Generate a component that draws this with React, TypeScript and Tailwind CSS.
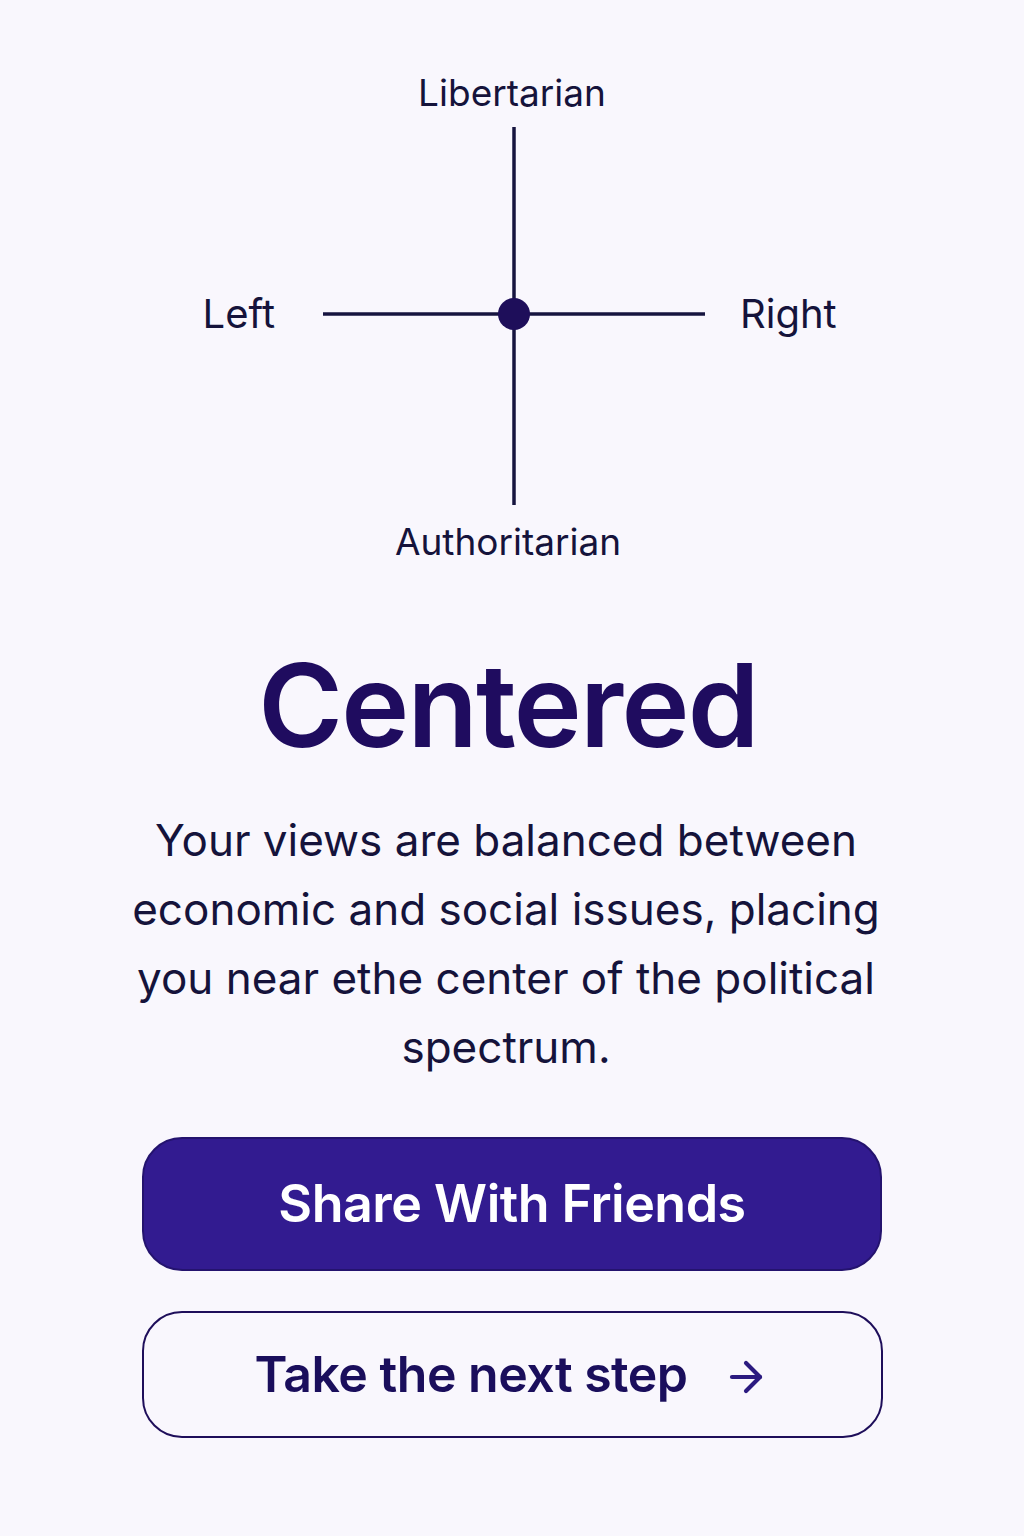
import React from "react";
import { ArrowRight } from "lucide-react";

const font = { fontFamily: "Inter, 'Noto Sans', sans-serif" };

function Compass() {
  return (
    <div className="flex flex-col items-center w-full">
      <p className="text-[37px] leading-none text-[#15133b] -mt-[2px]">Libertarian</p>

      <div className="grid grid-cols-[1fr_382px_1fr] items-center w-full mt-[16px] pl-1">
        <span className="justify-self-end pr-[48px] text-[40px] leading-none text-[#15133b] -mt-1">
          Left
        </span>
        <svg width="382" height="378" viewBox="0 0 382 378">
          <line x1="191" y1="0" x2="191" y2="378" stroke="#16143f" strokeWidth="3.5" />
          <line x1="0" y1="187" x2="382" y2="187" stroke="#16143f" strokeWidth="3.5" />
          <circle cx="191" cy="187" r="16" fill="#1e0e5a" />
        </svg>
        <span className="justify-self-start pl-[35px] text-[40px] leading-none text-[#15133b] -mt-1">
          Right
        </span>
      </div>

      <p className="text-[37px] leading-none text-[#15133b] mt-[18px] -ml-2">Authoritarian</p>
    </div>
  );
}

export default function App() {
  return (
    <div className="min-h-screen bg-[#f9f7fd] flex flex-col items-center pt-[76px]" style={font}>
      <Compass />

      <h1 className="mt-[88px] text-[115px] leading-none font-semibold tracking-[-0.015em] text-[#1f0c5f] -translate-x-[4px]">
        Centered
      </h1>

      <p className="mt-[43px] max-w-[780px] text-center text-[44px] leading-[69px] text-[#15133b] -translate-x-[6px]">
        Your views are balanced between economic and social issues, placing you near ethe center of the political spectrum.
      </p>

      <button className="mt-[55px] w-[740px] h-[134px] rounded-[40px] bg-[#321b90] border-2 border-[#24136e] text-white text-[52px] font-semibold tracking-[-0.01em] flex items-center justify-center">
        Share With Friends
      </button>

      <button className="mt-[40px] w-[741px] h-[127px] rounded-[40px] border-2 border-[#1e0e5a] bg-transparent text-[#1a0e5c] text-[50px] font-semibold tracking-[-0.01em] flex items-center justify-center gap-[34px]">
        Take the next step
        <ArrowRight size={48} strokeWidth={2.1} className="text-[#2b1a80] mt-1" />
      </button>
    </div>
  );
}
